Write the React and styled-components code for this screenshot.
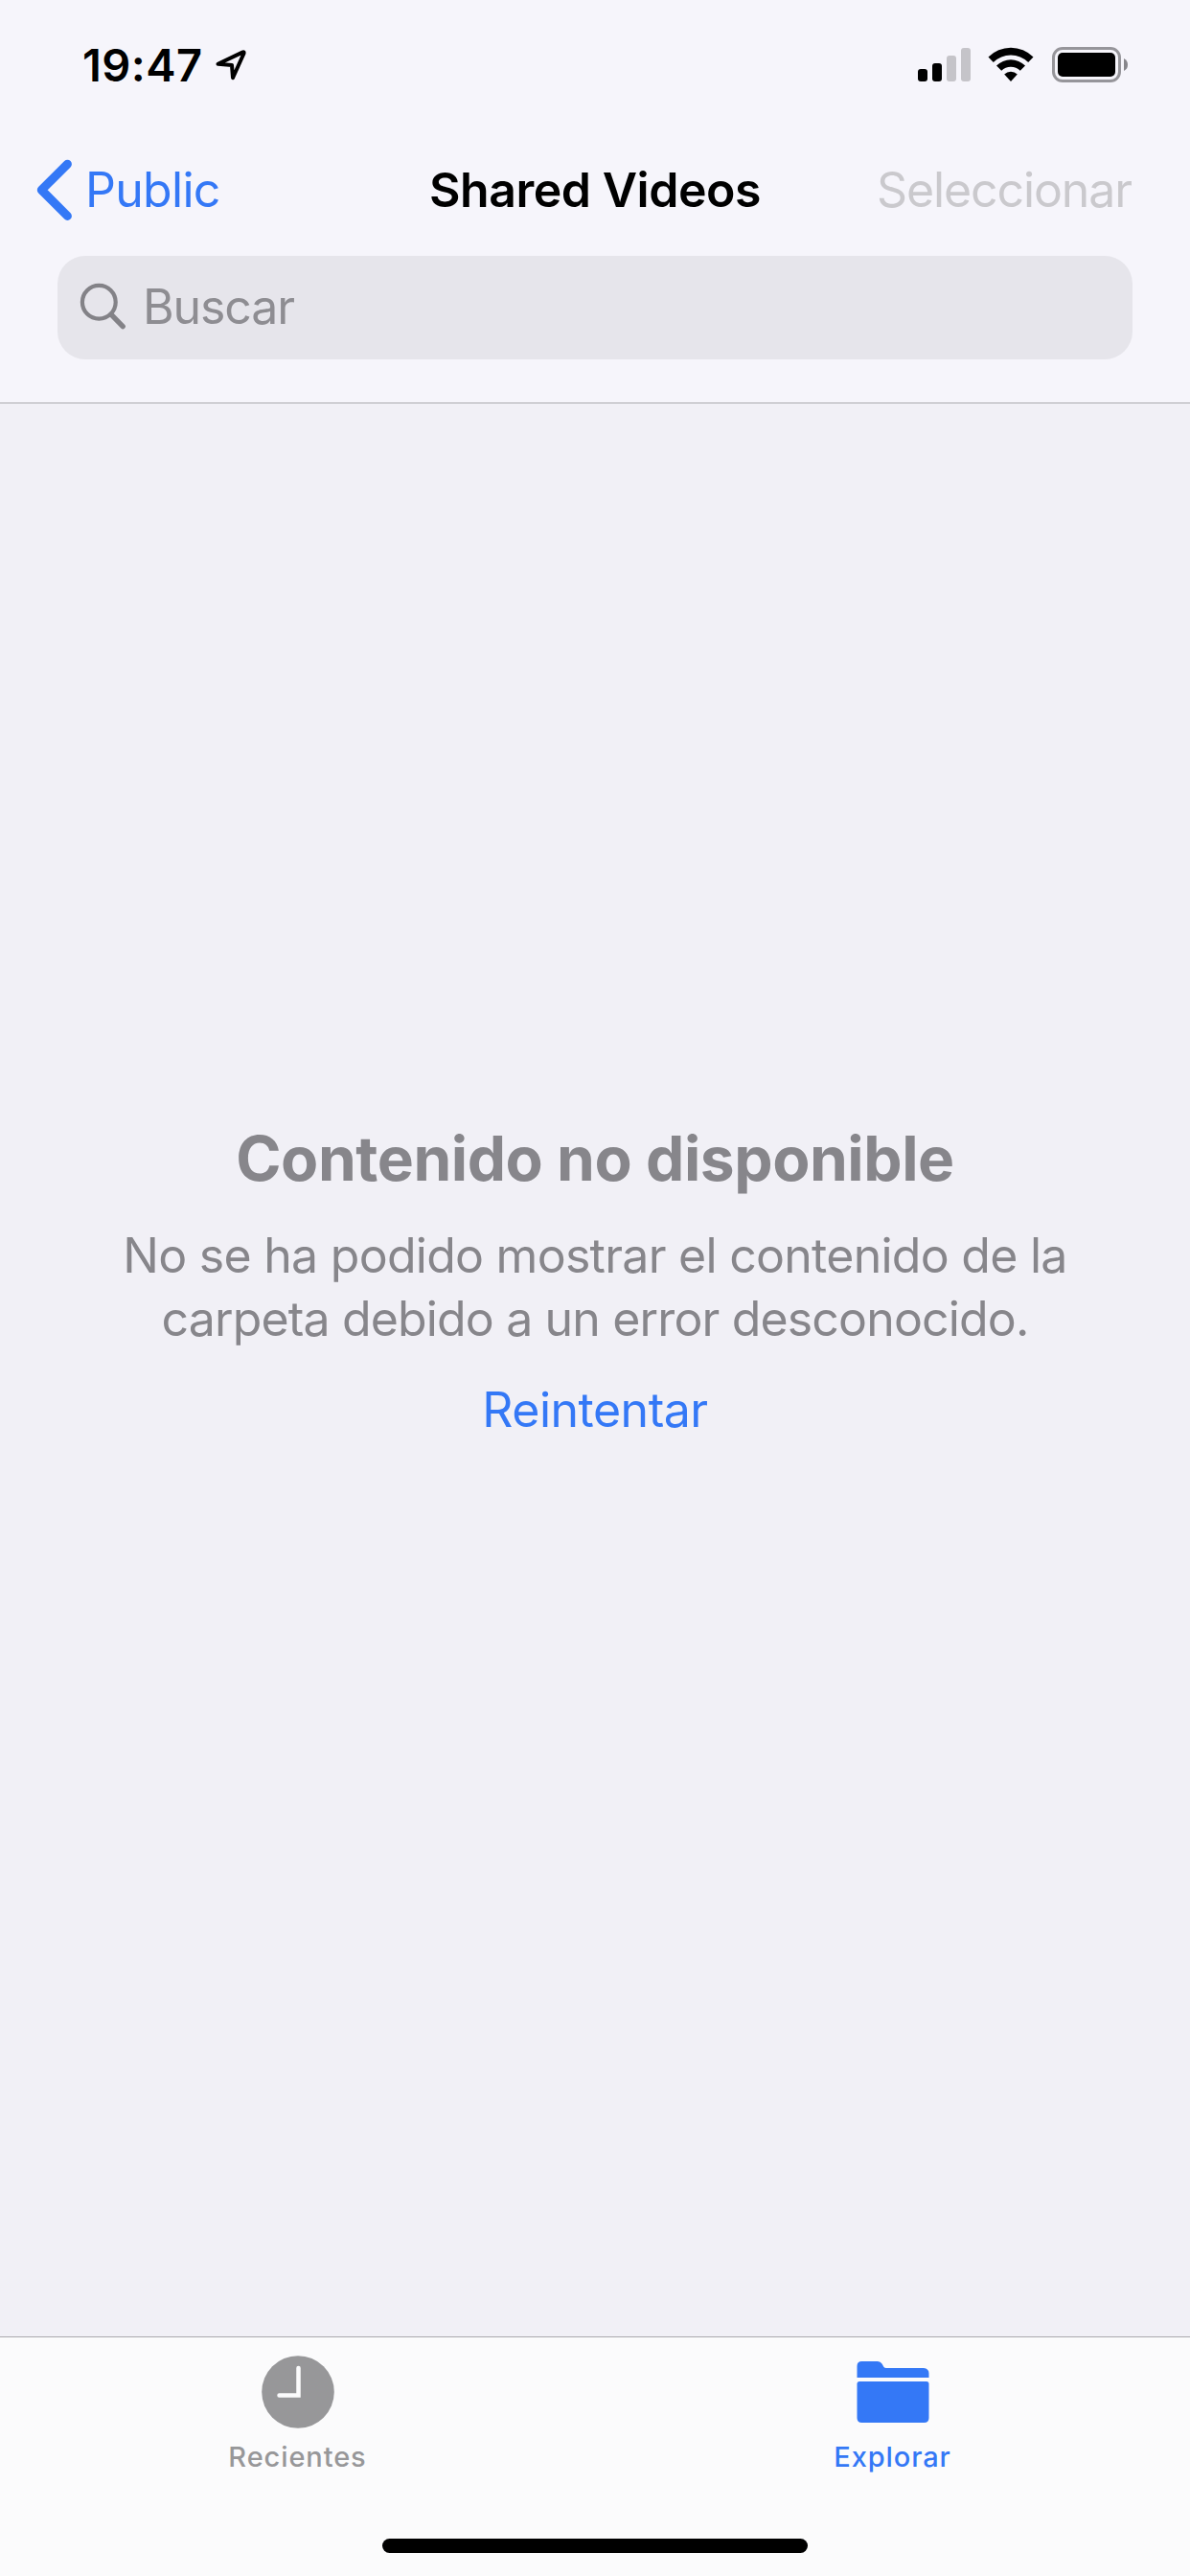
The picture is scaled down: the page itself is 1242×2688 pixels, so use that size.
import React from "react";
import styled, { createGlobalStyle } from "styled-components";

const GlobalStyle = createGlobalStyle`
  * { box-sizing: border-box; }
  body {
    margin: 0;
    background: #f1f0f6;
    font-family: Inter, "Liberation Sans", sans-serif;
  }
  button {
    border: 0;
    padding: 0;
    background: none;
    font: inherit;
  }
`;

const Screen = styled.div`
  display: flex;
  flex-direction: column;
  width: 1242px;
  height: 2688px;
  overflow: hidden;
  background: #f1f0f6;
`;

const Header = styled.header`
  display: flex;
  flex-direction: column;
  height: 421px;
  background: #f6f5fb;
  border-bottom: 1px solid #a9a9ad;
`;

const StatusBar = styled.div`
  display: flex;
  justify-content: space-between;
  align-items: center;
  height: 132px;
  padding: 2px 64px 0 86px;
`;

const StatusGroup = styled.div`
  display: flex;
  align-items: center;
`;

const Text = styled.span`
  font-size: ${(p) => p.$size || 50}px;
  font-weight: ${(p) => p.$weight || 400};
  line-height: ${(p) => p.$line || 60}px;
  letter-spacing: ${(p) => p.$track || 0}px;
  color: ${(p) => p.$color || "#000"};
  white-space: nowrap;
`;

const Clock = styled(Text)`
  padding-top: 2px;
`;

const LocationIcon = styled.svg`
  width: 34px;
  height: 34px;
  margin-left: 12px;
`;

const SignalIcon = styled.svg`
  width: 56px;
  height: 38px;
`;

const WifiIcon = styled.svg`
  width: 50px;
  height: 38px;
  margin-left: 16px;
`;

const BatteryIcon = styled.svg`
  width: 80px;
  height: 38px;
  margin-left: 18px;
`;

const NavBar = styled.nav`
  display: grid;
  grid-template-columns: 1fr auto 1fr;
  align-items: center;
  height: 132px;
  padding: 0 38px;
`;

const BackButton = styled.button`
  display: flex;
  align-items: center;
  gap: 13px;
  justify-self: start;
`;

const BackIcon = styled.svg`
  width: 38px;
  height: 66px;
`;

const SelectButton = styled.button`
  justify-self: end;
  margin-right: 23px;
`;

const SearchField = styled.div`
  display: flex;
  align-items: center;
  gap: 17px;
  height: 108px;
  margin: 3px 60px 0;
  padding: 0 0 3px 23px;
  border-radius: 29px;
  background: #e6e5eb;
`;

const SearchIcon = styled.svg`
  width: 49px;
  height: 49px;
`;

const Content = styled.main`
  flex: 1;
  display: flex;
  flex-direction: column;
  align-items: center;
  padding-top: 748px;
`;

const Message = styled.p`
  display: flex;
  flex-direction: column;
  align-items: center;
  margin: 28px 0 0;
`;

const RetryButton = styled.button`
  margin-top: 32px;
`;

const TabBar = styled.footer`
  display: flex;
  flex-direction: column;
  align-items: center;
  height: 250px;
  background: #fbfbfc;
  border-top: 1px solid #a9a9ad;
`;

const Tabs = styled.div`
  display: grid;
  grid-template-columns: 1fr 1fr;
  width: 100%;
  height: 210px;
`;

const Tab = styled.button`
  display: flex;
  flex-direction: column;
  align-items: center;
  padding-top: 19px;
`;

const TabIcon = styled.svg`
  width: 76px;
  height: 76px;
  margin-bottom: 12px;
`;

const HomeIndicator = styled.div`
  width: 444px;
  height: 15px;
  border-radius: 8px;
  background: #000;
`;

const BLUE = "#3478f6";
const GRAY = "#87868b";

export default function App() {
  return (
    <Screen>
      <GlobalStyle />
      <Header>
        <StatusBar>
          <StatusGroup>
            <Clock $size={47} $weight={600} $track={0.45}>19:47</Clock>
            <LocationIcon viewBox="0 0 34 34" fill="none" stroke="#000" strokeWidth="4" strokeLinejoin="round">
              <path d="M3.5 16.8 L29 4.6 Q31.2 3.6 30.4 6 L19 31.2 L18 18 Z" />
            </LocationIcon>
          </StatusGroup>
          <StatusGroup>
            <SignalIcon viewBox="0 0 56 38">
              <rect x="0" y="24" width="10" height="13" rx="3" />
              <rect x="15" y="18" width="10" height="19" rx="3" />
              <rect x="30" y="10" width="10" height="27" rx="3" fill="#c5c4c9" />
              <rect x="45" y="2" width="10" height="35" rx="3" fill="#c5c4c9" />
            </SignalIcon>
            <WifiIcon viewBox="0 0 50 38">
              <path d="M1.5 11.5 A33 33 0 0 1 48.5 11.5 L43.2 16.9 A26 26 0 0 0 6.8 16.9 Z" />
              <path d="M10 20.4 A21.5 21.5 0 0 1 40 20.4 L34.8 25.7 A14 14 0 0 0 15.2 25.7 Z" />
              <path d="M18.2 29.4 A10 10 0 0 1 31.8 29.4 L25 37 Z" />
            </WifiIcon>
            <BatteryIcon viewBox="0 0 80 38">
              <rect x="1.5" y="2.5" width="69" height="34" rx="9.5" fill="none" stroke="#96959a" strokeWidth="3" />
              <rect x="6" y="7" width="60" height="25" rx="5" />
              <path d="M75 13 Q79 15 79 19.5 Q79 24 75 26 Z" fill="#87868b" />
            </BatteryIcon>
          </StatusGroup>
        </StatusBar>
        <NavBar>
          <BackButton>
            <BackIcon viewBox="0 0 38 66" fill="none" stroke={BLUE} strokeWidth="9" strokeLinecap="round" strokeLinejoin="round">
              <path d="M32.4 6.3 L5.3 33.3 L32.4 60.4" />
            </BackIcon>
            <Text $color={BLUE} $track={-0.7}>Public</Text>
          </BackButton>
          <Text $weight={600} $track={-0.47}>Shared Videos</Text>
          <SelectButton>
            <Text $color="#cac9cd" $track={-1.1}>Seleccionar</Text>
          </SelectButton>
        </NavBar>
        <SearchField>
          <SearchIcon viewBox="0 0 49 49" fill="none" stroke="#838287" strokeLinecap="round">
            <circle cx="20.3" cy="20.3" r="17.4" strokeWidth="4.2" />
            <path d="M33 33.2 L45.2 45.6" strokeWidth="5.4" />
          </SearchIcon>
          <Text $color="#8e8d92" $track={-1.1}>Buscar</Text>
        </SearchField>
      </Header>
      <Content>
        <Text $size={64} $weight={700} $line={80} $color={GRAY} $track={-0.44}>Contenido no disponible</Text>
        <Message>
          <Text $line={66} $color={GRAY} $track={-0.73}>No se ha podido mostrar el contenido de la</Text>
          <Text $line={66} $color={GRAY} $track={-0.85}>carpeta debido a un error desconocido.</Text>
        </Message>
        <RetryButton>
          <Text $color={BLUE} $track={-0.5}>Reintentar</Text>
        </RetryButton>
      </Content>
      <TabBar>
        <Tabs>
          <Tab>
            <TabIcon viewBox="0 0 76 76">
              <circle cx="38" cy="38" r="37.8" fill="#979799" />
              <path d="M38.5 13 V41.5 H18.5" fill="none" stroke="#fbfbfc" strokeWidth="4.5" strokeLinecap="round" />
            </TabIcon>
            <Text $size={29} $weight={500} $line={36} $color="#979799" $track={0.9}>Recientes</Text>
          </Tab>
          <Tab>
            <TabIcon viewBox="0 0 76 76" fill={BLUE}>
              <path d="M0.5 23 V11 Q0.5 6 5.5 6 H22 Q25 6 26.5 8.5 L28.5 12 Q29.3 13 31 13 H70 Q75.5 13.5 75.5 18.5 V23 Z" />
              <path d="M3 27 H73 Q75.5 27 75.5 29.5 V65 Q75.5 70 70.5 70 H5.5 Q0.5 70 0.5 65 V29.5 Q0.5 27 3 27 Z" />
            </TabIcon>
            <Text $size={29} $weight={500} $line={36} $color={BLUE} $track={0.9}>Explorar</Text>
          </Tab>
        </Tabs>
        <HomeIndicator />
      </TabBar>
    </Screen>
  );
}
